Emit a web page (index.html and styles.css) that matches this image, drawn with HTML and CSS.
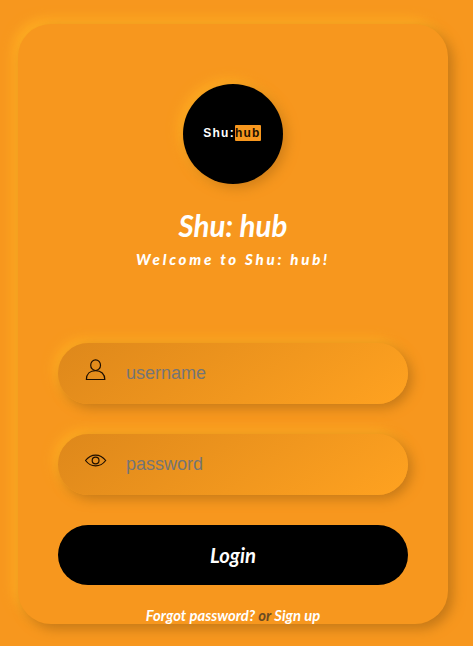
FILE: index.html
```html
<!DOCTYPE html>
<html lang="en">
<head>
<meta charset="utf-8">
<title>Shu: hub</title>
<link rel="stylesheet" href="styles.css">
</head>
<body>
<main class="card">
  <div class="logo"><span class="logo-left">Shu:</span><span class="logo-right">hub</span></div>
  <h1 class="title">Shu: hub</h1>
  <p class="subtitle">Welcome to Shu: hub!</p>
  <form class="fields">
    <label class="field">
      <svg class="icon" viewBox="0 0 22 22"><ellipse cx="10.6" cy="6.2" rx="4.9" ry="5.3"/><path d="M1.4 20.5C1.4 15 5.1 11.6 10.6 11.6S19.8 15 19.8 20.5Z"/></svg>
      <input class="input" type="text" placeholder="username">
    </label>
    <label class="field">
      <svg class="icon" viewBox="0 0 22 22"><path d="M.5 10.5C6.1 3.3 15.1 3.3 20.7 10.5C15.1 17.7 6.1 17.7.5 10.5Z"/><circle cx="10.6" cy="10.5" r="3.4"/></svg>
      <input class="input" type="password" placeholder="password">
    </label>
    <button class="login" type="button">Login</button>
  </form>
  <p class="links"><a>Forgot password?</a> or <a>Sign up</a></p>
</main>
</body>
</html>
```
FILE: styles.css
```css
* { box-sizing: border-box; }

body {
  margin: 0;
  height: 646px;
  overflow: hidden;
  background: #f7971e;
  font-family: Lato, sans-serif;
}

.card {
  width: 430px;
  height: 600px;
  margin: 24px 0 0 18px;
  padding: 60px 40px 0;
  border-radius: 33px;
  background: #f7971e;
  box-shadow: 5px 5px 12px #c67918, -5px -5px 12px #ffae23;
}

.logo {
  display: flex;
  align-items: center;
  justify-content: center;
  width: 100px;
  height: 100px;
  margin: 0 auto;
  padding: 0 2px 3px 0;
  border-radius: 50%;
  background: #000;
  box-shadow: 4px 4px 12px #d17f19, -4px -4px 12px #ffae23;
  font: bold 12px/16px "Liberation Sans", sans-serif;
  letter-spacing: 1.25px;
}

.logo-left { color: #fff; }

.logo-right {
  border-radius: 1px;
  background: #f7971e;
  color: #1c1000;
}

.title {
  margin: 23px 0 0;
  color: #fff;
  font-size: 29.5px;
  font-style: italic;
  font-weight: 700;
  line-height: 37px;
  text-align: center;
}

.subtitle {
  margin: 5px 0 0;
  color: #fff;
  font-size: 15px;
  font-style: italic;
  font-weight: 900;
  line-height: 20px;
  letter-spacing: 2.8px;
  text-align: center;
}

.fields {
  display: flex;
  flex-direction: column;
  gap: 30px;
  margin-top: 74px;
}

.field {
  display: flex;
  align-items: center;
  height: 61px;
  padding-left: 27px;
  border-radius: 31px;
  background: linear-gradient(145deg, #de881b, #ffa220);
  box-shadow: 4px 4px 12px #c67918, -4px -4px 12px #ffae23;
}

.icon {
  width: 22px;
  height: 22px;
  margin-bottom: 7px;
  fill: none;
  stroke: #1c0d00;
  stroke-width: 1.2;
}

.input {
  width: 250px;
  margin-left: 19px;
  padding: 0;
  border: 0;
  outline: 0;
  background: none;
  font: 18px "Liberation Sans", sans-serif;
}

.input::placeholder { color: #757575; }

.login {
  height: 60px;
  padding: 0;
  border: 0;
  border-radius: 30px;
  background: #000;
  color: #fff;
  font: italic 700 20.3px Lato, sans-serif;
}

.links {
  margin: 20px 0 0;
  color: #6b4b23;
  font-size: 14.8px;
  font-style: italic;
  font-weight: 700;
  line-height: 20px;
  text-align: center;
}

.links a { color: #fff; }
```
